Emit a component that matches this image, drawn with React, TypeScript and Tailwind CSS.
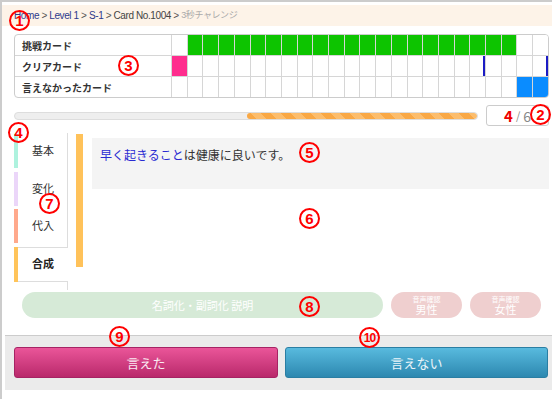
import React from "react";

const green = new Set<number>(Array.from({ length: 21 }, (_, i) => i + 1));

function Mark({ n, cls }: { n: string; cls: string }) {
  return (
    <div
      className={`absolute w-[21px] h-[21px] rounded-full border-2 border-[#ff0000] text-[#ff0000] font-extrabold flex items-center justify-center leading-none ${cls}`}
      style={{ fontFamily: "'Liberation Sans', Arial, sans-serif" }}
    >
      {n}
    </div>
  );
}

function Cells({ kind }: { kind: number }) {
  return (
    <>
      {Array.from({ length: 24 }, (_, i) => {
        let c = "bg-white";
        if (kind === 0 && green.has(i)) c = "bg-[#0dc400]";
        if (kind === 1 && i === 0) c = "bg-[#ff2d8e]";
        if (kind === 2 && i >= 22) c = "bg-[#0a8cff]";
        const line = kind === 1 && (i === 19 || i === 23) ? "shadow-[inset_-2px_0_0_#1c1cc4]" : "";
        return <div key={i} className={`flex-1 border-l border-[#d6d6d6] ${c} ${line}`} />;
      })}
    </>
  );
}

export default function App() {
  const rows = ["挑戦カード", "クリアカード", "言えなかったカード"];
  return (
    <div
      className="relative w-[552px] h-[399px] bg-white border-t-2 border-l-2 border-[#cccccc] overflow-hidden"
      style={{ fontFamily: "'Noto Sans CJK JP', 'Noto Sans', sans-serif" }}
    >
      {/* breadcrumb */}
      <div
        className="mt-[3px] h-[21px] bg-[#fdf3e8] pl-[12px] flex items-center text-[10px] tracking-[-0.4px] text-[#555] whitespace-pre"
        style={{ fontFamily: "'Liberation Sans', 'Noto Sans CJK JP', sans-serif" }}
      >
        <span className="text-[#2d3a8c]">Home</span>
        <span>{" > "}</span>
        <span className="text-[#2d3a8c]">Level 1</span>
        <span>{" > "}</span>
        <span className="text-[#2d3a8c]">S-1</span>
        <span>{" > "}</span>
        <span className="text-[#444]">Card No.1004</span>
        <span>{" > "}</span>
        <span className="text-[#aaaaaa] text-[9px]">3秒チャレンジ</span>
      </div>

      {/* table */}
      <div className="mt-[8px] ml-[12px] w-[535px] border border-[#cccccc] rounded-[4px] overflow-hidden">
        {rows.map((r, k) => (
          <div key={r} className={`flex ${k < 2 ? "h-[21px] border-b border-[#d6d6d6]" : "h-[20px]"}`}>
            <div className="w-[156px] pl-[7px] flex items-center text-[10px] font-bold text-[#333]">{r}</div>
            <Cells kind={k} />
          </div>
        ))}
      </div>

      {/* progress */}
      <div className="mt-[7px] h-[21px] pl-[12px] flex items-center">
        <div className="w-[464px] h-[8px] rounded-full bg-[#eeeeee] border border-[#dddddd] flex overflow-hidden">
          <div className="flex-1" />
          <div className="w-[230px] h-full rounded-full bg-[repeating-linear-gradient(45deg,#f9a845_0px,#f9a845_7px,#fcbd6c_7px,#fcbd6c_14px)]" />
        </div>
        <div className="ml-[8px] w-[63px] h-[21px] border border-[#cccccc] rounded-[3px] flex items-center justify-center">
          <span className="text-[15px] font-bold text-[#ee0000] leading-none">4</span>
          <span className="text-[11px] text-[#888] mx-[3px] leading-none">/</span>
          <span className="text-[14px] text-[#888] leading-none">6</span>
        </div>
      </div>

      {/* main */}
      <div className="mt-[7px] h-[157px] ml-[12px] flex items-start">
        <div className="w-[54px] flex flex-col">
          <div className="h-[114px] border-r border-[#dddddd] pt-[1px] flex flex-col">
            <div className="h-[34px] flex">
              <div className="w-[4px] bg-[#aef2de]" />
              <div className="flex-1 pl-[14px] pb-[2px] flex items-center text-[11px] text-[#333]">基本</div>
            </div>
            <div className="h-[34px] mt-[4px] flex">
              <div className="w-[4px] bg-[#ebd6f9]" />
              <div className="flex-1 pl-[14px] pb-[2px] flex items-center text-[11px] text-[#333]">変化</div>
            </div>
            <div className="h-[34px] mt-[3px] flex">
              <div className="w-[4px] bg-[#ffa98c]" />
              <div className="flex-1 pl-[14px] pb-[2px] flex items-center text-[11px] text-[#333]">代入</div>
            </div>
          </div>
          <div className="h-[35px] flex">
            <div className="w-[4px] bg-[#ffc45a]" />
            <div className="flex-1 pl-[14px] pb-[2px] flex items-center text-[11px] font-bold text-[#222] border-t border-b border-[#dddddd]">
              合成
            </div>
          </div>
          <div className="h-[8px] border-r border-[#dddddd]" />
        </div>
        <div className="ml-[8px] mt-[1px] w-[7px] h-[133px] bg-[#ffc25a]" />
        <div className="ml-[9px] mt-[5px] w-[457px] h-[51px] bg-[#f4f4f4] pl-[8px] pt-[8px] text-[12px] leading-[17px] text-[#333]">
          <span className="text-[#2a2ad2]">早く起きること</span>は健康に良いです。
        </div>
      </div>

      {/* pills */}
      <div className="mt-[2px] pl-[20px] flex gap-[8px]">
        <div className="w-[361px] h-[26px] rounded-full bg-[#d6ead7] flex items-center justify-center text-[11px] text-white">
          名詞化・副詞化 説明
        </div>
        <div className="w-[71px] h-[26px] rounded-full bg-[#efcfcf] flex flex-col items-center justify-center text-white">
          <span className="text-[7px] leading-[8px]">音声確認</span>
          <span className="text-[11px] leading-[12px]">男性</span>
        </div>
        <div className="w-[71px] h-[26px] rounded-full bg-[#efcfcf] flex flex-col items-center justify-center text-white">
          <span className="text-[7px] leading-[8px]">音声確認</span>
          <span className="text-[11px] leading-[12px]">女性</span>
        </div>
      </div>

      {/* bottom */}
      <div className="mt-[17px] ml-[3px] h-[55px] border-t border-[#cccccc] bg-[#ebebeb] pl-[9px] pt-[11px] flex gap-[7px]">
        <div className="w-[264px] h-[31px] rounded-[3px] border border-[#a62364] bg-[linear-gradient(#ea5599,#b9296b)] flex items-center justify-center text-[13px] text-white/90">
          言えた
        </div>
        <div className="w-[263px] h-[31px] rounded-[3px] border border-[#2a7ea3] bg-[linear-gradient(#58bade,#2d88b0)] flex items-center justify-center text-[13px] text-white/90">
          言えない
        </div>
      </div>

      {/* annotation marks */}
      <Mark n="1" cls="left-[7px] top-[8px] text-[15px]" />
      <Mark n="2" cls="left-[528px] top-[102px] text-[15px]" />
      <Mark n="3" cls="left-[116px] top-[53px] text-[15px]" />
      <Mark n="4" cls="left-[6px] top-[120px] text-[15px]" />
      <Mark n="5" cls="left-[297px] top-[140px] text-[15px]" />
      <Mark n="6" cls="left-[297px] top-[206px] text-[15px]" />
      <Mark n="7" cls="left-[37px] top-[191px] text-[15px]" />
      <Mark n="8" cls="left-[297px] top-[294px] text-[15px]" />
      <Mark n="9" cls="left-[107px] top-[324px] text-[15px]" />
      <Mark n="10" cls="left-[357px] top-[325px] text-[12px] tracking-[-1px]" />
    </div>
  );
}
